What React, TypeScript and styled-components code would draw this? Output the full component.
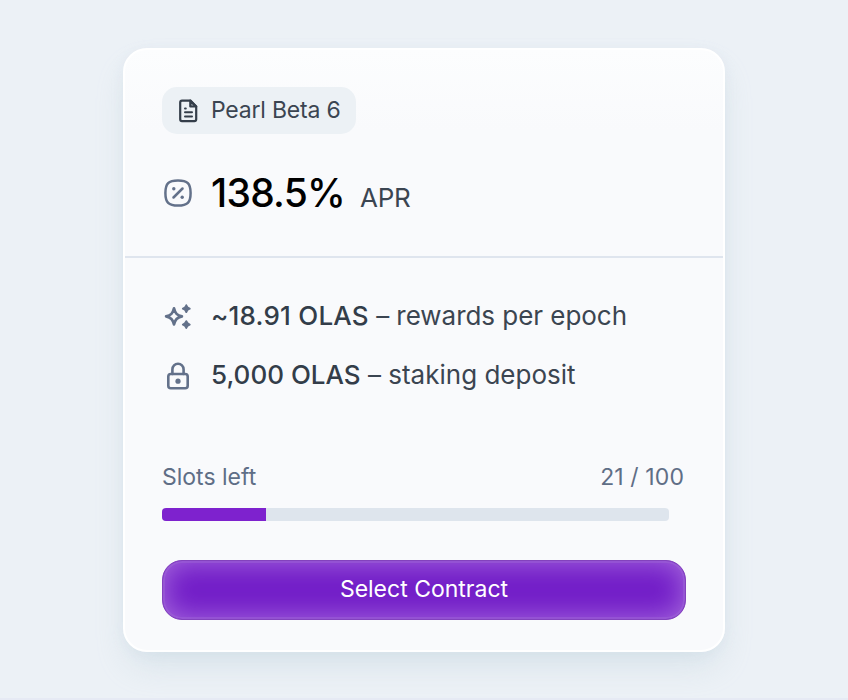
import React from "react";
import styled, { createGlobalStyle } from "styled-components";

const GlobalStyle = createGlobalStyle`
  * { box-sizing: border-box; }
  body {
    margin: 0;
    background: #ecf1f6;
    font-family: Inter, "Liberation Sans", sans-serif;
  }
`;

const Page = styled.main`
  display: flex;
  justify-content: center;
  align-items: flex-start;
  height: 700px;
  padding-top: 48px;
  overflow: hidden;
  background: #ecf1f6;
  border-bottom: 2px solid #e6eaf4;
`;

const Card = styled.article`
  width: 602px;
  height: 604px;
  border: 2px solid #fff;
  border-radius: 24px;
  background: linear-gradient(#fcfdfe, #f9fafc 80px);
  box-shadow: 0 18px 32px -6px rgba(170, 195, 208, 0.32), 0 2px 14px rgba(200, 213, 228, 0.2);
`;

const Header = styled.header`
  height: 208px;
  padding: 37px 37px 0;
  border-bottom: 2px solid #dfe5ee;
`;

const Tag = styled.div`
  display: inline-flex;
  align-items: center;
  width: 194px;
  height: 47px;
  padding-left: 14px;
  gap: 11px;
  border-radius: 15px;
  background: #ecf1f5;
  color: #343e4a;
`;

const Label = styled.span<{ $size: number; $spacing?: number; $weight?: number; $color?: string }>`
  font-size: ${(p) => p.$size}px;
  letter-spacing: ${(p) => p.$spacing ?? 0}px;
  font-weight: ${(p) => p.$weight ?? 390};
  color: ${(p) => p.$color ?? "#3b4551"};
  line-height: 1.2;
  white-space: pre;
`;

const Rate = styled.div`
  display: flex;
  align-items: baseline;
  gap: 15px;
`;

const Row = styled.div<{ $height: number }>`
  display: flex;
  align-items: center;
  height: ${(p) => p.$height}px;
  gap: 17px;
  color: #63718a;
`;

const RateRow = styled(Row)`
  margin-top: 29px;
`;

const DepositLabel = styled(Label)`
  padding-bottom: 2px;
`;

const Body = styled.section`
  padding: 28px 37px 0;
`;

const Slots = styled.div`
  display: flex;
  justify-content: space-between;
  align-items: center;
  height: 30px;
  margin: 58px 2px 0 0;
`;

const Track = styled.div`
  width: 507px;
  height: 13px;
  margin-top: 15px;
  border-radius: 4px;
  overflow: hidden;
  background: #dee5ed;
`;

const Fill = styled.div`
  width: 104px;
  height: 100%;
  background: #7e22ce;
`;

const Button = styled.button`
  display: flex;
  align-items: center;
  justify-content: center;
  width: 524px;
  height: 60px;
  margin-top: 39px;
  padding: 0 0 1px;
  border: 1px solid #8342bd;
  border-radius: 20px;
  background: #721dc8;
  box-shadow: inset 0 0 0 2px rgba(164, 112, 214, 0.35), inset 0 0 28px 2px rgba(190, 140, 230, 0.68);
  font-family: inherit;
`;

const Icon = styled.svg`
  display: block;
  flex: none;
  overflow: visible;
  fill: none;
  stroke: currentColor;
  stroke-linecap: round;
  stroke-linejoin: round;
`;

function DocumentIcon() {
  return (
    <Icon width="24" height="24" viewBox="0 0 24 24" strokeWidth="2.2">
      <path d="M14.3 1.6H6a1.8 1.8 0 0 0-1.8 1.8v16.9a1.8 1.8 0 0 0 1.8 1.8h12.4a1.8 1.8 0 0 0 1.8-1.8V7.5Z" />
      <path d="M14.3 1.6v5.9h5.9Z" fill="currentColor" fillOpacity="0.35" />
      <path d="M9 9.4h.8M9 13.3h7M9 17.4h7" strokeWidth="2" />
    </Icon>
  );
}

function PercentIcon() {
  return (
    <Icon width="32" height="32" viewBox="0 0 32 32" strokeWidth="2.5">
      <path d="M16 3.4C6.5 3.4 3.4 6.5 3.4 16S6.5 28.6 16 28.6 28.6 25.5 28.6 16 25.5 3.4 16 3.4Z" />
      <path d="m11.5 20.5 9-9" />
      <circle cx="11.8" cy="11.8" r="1.7" fill="currentColor" stroke="none" />
      <circle cx="20.2" cy="20.2" r="1.7" fill="currentColor" stroke="none" />
    </Icon>
  );
}

function SparklesIcon() {
  return (
    <Icon width="32" height="32" viewBox="0 0 32 32" strokeWidth="2.7">
      <path d="M12 8.4c1.2 5 3 6.8 7.9 8-4.9 1.2-6.7 3-7.9 8-1.2-5-3-6.8-7.9-8 4.9-1.2 6.7-3 7.9-8Z" />
      <path d="M24.3 5.2c.7 2.3 1.2 2.8 3.5 3.5-2.3.7-2.8 1.2-3.5 3.5-.7-2.3-1.2-2.8-3.5-3.5 2.3-.7 2.8-1.2 3.5-3.5ZM24.3 21.1c.7 2.3 1.2 2.8 3.5 3.5-2.3.7-2.8 1.2-3.5 3.5-.7-2.3-1.2-2.8-3.5-3.5 2.3-.7 2.8-1.2 3.5-3.5Z" fill="currentColor" strokeWidth="1.8" />
    </Icon>
  );
}

function LockIcon() {
  return (
    <Icon width="32" height="32" viewBox="0 0 32 32" strokeWidth="2.6">
      <rect x="6.3" y="14" width="19.4" height="14.2" rx="2.5" />
      <path d="M10.4 14V9.4a5.6 5.6 0 0 1 11.2 0V14" />
      <circle cx="16" cy="21.2" r="2.6" fill="currentColor" stroke="none" />
    </Icon>
  );
}

export default function App() {
  return (
    <>
      <GlobalStyle />
      <Page>
        <Card>
          <Header>
            <Tag>
              <DocumentIcon />
              <Label $size={23} $spacing={-0.2}>Pearl Beta 6</Label>
            </Tag>
            <RateRow $height={60}>
              <PercentIcon />
              <Rate>
                <Label $size={39} $spacing={-0.75} $weight={500} $color="#000">138.5%</Label>
                <Label $size={26} $spacing={-0.3}>APR</Label>
              </Rate>
            </RateRow>
          </Header>
          <Body>
            <Row $height={60}>
              <SparklesIcon />
              <Label $size={26} $spacing={-0.04}><Label as="b" $size={26} $spacing={0.22} $weight={500} $color="#333d49">~18.91 OLAS</Label> – rewards per epoch</Label>
            </Row>
            <Row $height={59}>
              <LockIcon />
              <DepositLabel $size={26}><Label as="b" $size={26} $weight={500} $color="#333d49">5,000 OLAS</Label> – staking deposit</DepositLabel>
            </Row>
            <Slots>
              <Label $size={23} $color="#5f6e86">Slots left</Label>
              <Label $size={23} $spacing={0.1} $color="#5f6e86">21 / 100</Label>
            </Slots>
            <Track><Fill /></Track>
            <Button>
              <Label $size={23} $color="#fff">Select Contract</Label>
            </Button>
          </Body>
        </Card>
      </Page>
    </>
  );
}
